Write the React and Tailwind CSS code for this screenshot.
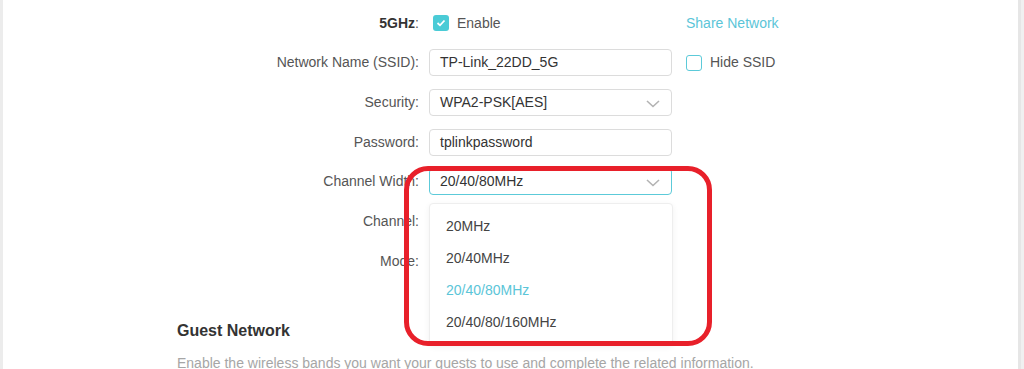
import React from "react";

const font = { fontFamily: '"Liberation Sans", Arial, sans-serif' };

function Chevron() {
    return (
        <svg width="14" height="8" viewBox="0 0 14 8" className="absolute right-[11px] top-[10px]">
            <path d="M1 1 L7 6.5 L13 1" fill="none" stroke="#b3b3b3" strokeWidth="1.6" />
        </svg>
    );
}

function Check({checked}) {
    return checked ? (
        <span className="w-4 h-4 rounded-[3px] bg-[#4acbd6] flex items-center justify-center">
            <svg width="10" height="8" viewBox="0 0 10 8">
                <path d="M1.5 4 L4 6.3 L8.5 1.5" fill="none" stroke="#fff" strokeWidth="1.8" />
            </svg>
        </span>
    ) : (
        <span className="w-4 h-4 rounded-[3px] border border-[#5ccad9] bg-white"></span>
    );
}

function Row({label, bold, children, extra}) {
    return (
        <div className="flex items-center h-[27px]">
            <div className="w-[242px] text-right text-[14px] text-[#555] pr-0">
                {bold ? <><span className="font-bold text-[#333]">{label}</span>:</> : label}
            </div>
            <div className="w-[243px] ml-[10px] h-full relative">{children}</div>
            {extra && <div className="ml-[14px]">{extra}</div>}
        </div>
    );
}

function Field({value, select, focus}) {
    return (
        <div
            className={`h-full w-full rounded-[4px] border bg-white flex items-center pl-[10px] text-[14px] text-[#333] relative ${
                focus ? "border-[#5ccad9]" : "border-[#dcdcdc]"
            }`}
        >
            {value}
            {select && <Chevron />}
        </div>
    );
}

export default function App() {
    const widths = ["20MHz", "20/40MHz", "20/40/80MHz", "20/40/80/160MHz"];

    return (
        <div className="flex h-[369px] w-full overflow-hidden bg-white" style={font}>
            <div className="w-[3px] bg-[#ececec]"></div>
            <div className="flex-1 relative bg-white pl-[174px] pt-[9.5px]">
                <div className="flex flex-col gap-[12.7px]">
                    <Row
                        label="5GHz"
                        bold
                        extra={
                            <span className="text-[14px] text-[#5bc5d8] ml-[-14px] relative left-[14px]">Share Network</span>
                        }
                    >
                        <div className="flex items-center h-full pl-[4px] gap-2 text-[14px] text-[#555]">
                            <Check checked />
                            <span>Enable</span>
                        </div>
                    </Row>
                    <Row
                        label="Network Name (SSID):"
                        extra={
                            <div className="flex items-center gap-2 text-[14px] text-[#555]">
                                <Check />
                                <span>Hide SSID</span>
                            </div>
                        }
                    >
                        <Field value="TP-Link_22DD_5G" />
                    </Row>
                    <Row label="Security:">
                        <Field value="WPA2-PSK[AES]" select />
                    </Row>
                    <Row label="Password:">
                        <Field value="tplinkpassword" />
                    </Row>
                    <Row label="Channel Width:">
                        <Field value="20/40/80MHz" select focus />
                        <div className="absolute left-0 top-[35px] w-[244px] bg-white border border-[#eeeeee] rounded-[4px] shadow-[0_2px_6px_rgba(0,0,0,0.06)] py-[6px] z-10">
                            {widths.map((w) => (
                                <div
                                    key={w}
                                    className={`h-[32px] flex items-center pl-[16px] text-[14px] ${
                                        w === "20/40/80MHz" ? "text-[#5bc5d8]" : "text-[#444]"
                                    }`}
                                >
                                    {w}
                                </div>
                            ))}
                        </div>
                    </Row>
                    <Row label="Channel:"></Row>
                    <Row label="Mode:"></Row>
                </div>

                <h3 className="mt-[46px] text-[16px] leading-[20px] font-bold text-[#333]">Guest Network</h3>
                <p className="mt-[12px] text-[14px] leading-[20px] text-[#a6a6a6] whitespace-nowrap">
                    Enable the wireless bands you want your guests to use and complete the related information.
                </p>

                {/* red annotation box */}
                <div className="absolute left-[401px] top-[166px] w-[308px] h-[180px] border-[5px] border-[#e8202a] rounded-[24px] z-20 pointer-events-none"></div>
            </div>
            <div className="w-[6px] flex">
                <div className="w-[3px] bg-[#e6e6e6]"></div>
                <div className="w-[3px] bg-[#f0f0f0]"></div>
            </div>
        </div>
    );
}
